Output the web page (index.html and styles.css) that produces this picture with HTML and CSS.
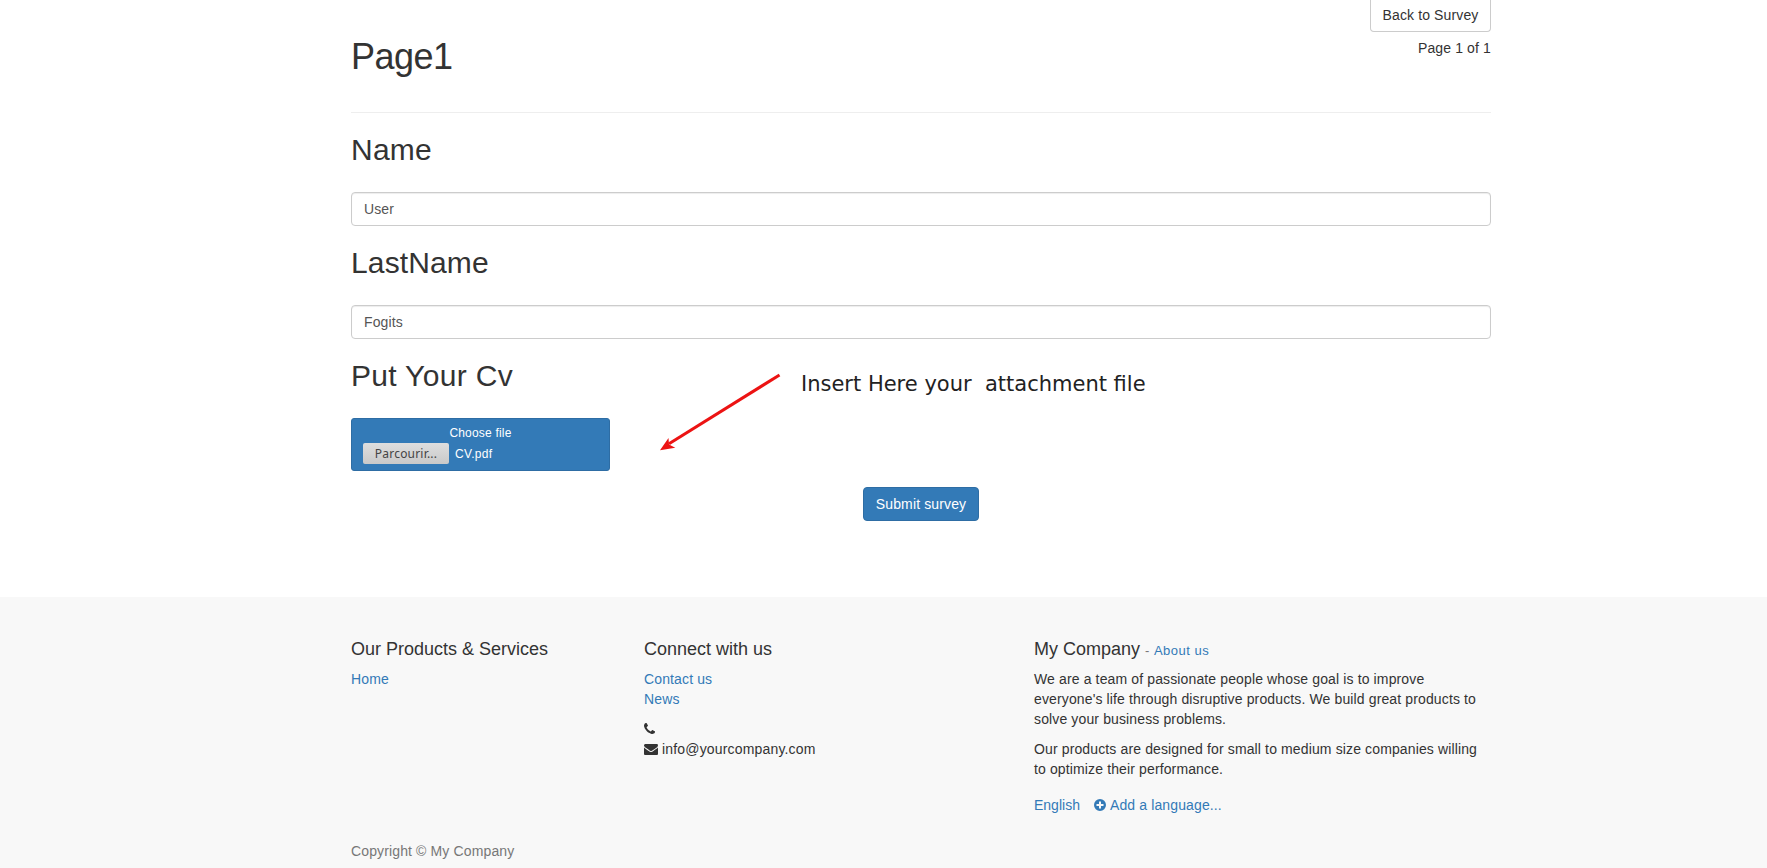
FILE: index.html
```html
<!DOCTYPE html>
<html lang="en">
<head>
<meta charset="utf-8">
<title>Survey</title>
<link rel="stylesheet" href="styles.css">
</head>
<body>
<main class="container">
  <header class="page-header">
    <h1 class="title">Page1</h1>
    <div class="header-side">
      <a class="btn btn-back">Back to Survey</a>
      <div class="pager">Page 1 of 1</div>
    </div>
  </header>
  <form class="survey">
    <h2 class="question q-name">Name</h2>
    <div class="control">User</div>
    <h2 class="question q-last">LastName</h2>
    <div class="control">Fogits</div>
    <h2 class="question q-cv">Put Your Cv</h2>
    <div class="file-box">
      <span class="file-label">Choose file</span>
      <div class="file-row"><span class="browse">Parcourir...</span><span class="file-name">CV.pdf</span></div>
    </div>
    <div class="actions"><a class="btn btn-submit">Submit survey</a></div>
    <svg class="arrow" width="130" height="84" viewBox="0 0 130 84">
      <path d="M119.500 5 L9 73.700" stroke="#ec1313" stroke-width="3" fill="none"/>
      <path d="M0 80.300 L8.500 68 L9 74.500 L15.300 77.700 Z" fill="#ec1313"/>
    </svg>
    <div class="note">Insert Here your&nbsp; attachment file</div>
  </form>
</main>
<footer class="footer">
  <div class="container columns">
    <section class="col-products">
      <h4>Our Products &amp; Services</h4>
      <a>Home</a>
    </section>
    <section class="col-connect">
      <h4>Connect with us</h4>
      <ul class="links">
        <li><a>Contact us</a></li>
        <li><a>News</a></li>
      </ul>
      <ul class="links">
        <li><svg class="icon phone" viewBox="0 0 1408 1408"><path d="M1408 1112q0 27-10 70.500t-21 68.500q-21 50-122 106-94 51-186 51-27 0-53-3.500t-57.500-12.500-47-14.500-55.500-20.500-49-18q-98-35-175-83-127-79-264-216t-216-264q-48-77-83-175-3-9-18-49t-20.500-55.500-14.500-47-12.500-57.500-3.500-53q0-92 51-186 56-101 106-122 25-11 68.500-21t70.500-10q14 0 21 3 18 6 53 76 11 19 30 54t35 63.500 31 53.500q3 4 17.500 25t21.500 35.500 7 28.500q0 20-28.500 50t-62 55-62 53-28.500 46q0 9 5 22.500t8.500 20.500 14 24 11.500 19q76 137 174 235t235 174q2 1 19 11.500t24 14 20.500 8.500 22.500 5q18 0 46-28.500t53-62 55-62 50-28.500q14 0 28.500 7t35.500 21.500 25 17.500q25 15 53.500 31t63.500 35 54 30q70 35 76 53 3 7 3 21z"/></svg></li>
        <li class="mail-row"><svg class="icon mail" viewBox="0 0 1792 1408"><path d="M1792 454v794q0 66-47 113t-113 47h-1472q-66 0-113-47t-47-113v-794q44 49 101 87 362 246 497 345 57 42 92.500 65.500t94.500 48 110 24.500h2q51 0 110-24.500t94.500-48 92.500-65.500q170-123 498-345 57-39 100-87zm0-294q0 79-49 151t-122 123q-376 261-468 325-10 7-42.500 30.500t-54 38-52 32.500-57.500 27-50 9h-2q-23 0-50-9t-57.500-27-52-32.500-54-38-42.500-30.500q-91-64-262-182.500t-205-142.500q-62-42-117-115.500t-55-136.500q0-78 41.500-130t118.500-52h1472q65 0 112.500 47t47.500 113z"/></svg>info@yourcompany.com</li>
      </ul>
    </section>
    <section class="col-company">
      <h4>My Company<small class="about"><span class="dash">-</span><a>About us</a></small></h4>
      <p>We are a team of passionate people whose goal is to improve<br>everyone's life through disruptive products. We build great products to<br>solve your business problems.</p>
      <p>Our products are designed for small to medium size companies willing<br>to optimize their performance.</p>
      <div class="languages"><a class="current-lang">English</a><a class="add-lang"><svg class="icon plus" viewBox="0 0 12 12"><path fill-rule="evenodd" d="M6 0a6 6 0 1 1 0 12a6 6 0 0 1 0-12zM5 2.500V5H2.500V7H5V9.500H7V7H9.500V5H7V2.500z"/></svg>Add a language...</a></div>
    </section>
  </div>
  <div class="container copyright">Copyright © My Company</div>
</footer>
</body>
</html>
```

FILE: styles.css
```css
* { box-sizing: border-box; }
body { margin: 0; height: 868px; overflow: hidden; background: #fff; color: #333; font: 14px/20px "Liberation Sans", Arial, sans-serif; letter-spacing: .13px; display: flex; flex-direction: column; }
h1, h2, h4, p, ul { margin: 0; padding: 0; font-weight: 400; }
ul { list-style: none; }
a { color: #337ab7; text-decoration: none; }
p, .btn, .note { white-space: nowrap; }
.container { width: 1140px; margin-left: 351px; }
main.container { height: 597px; flex: none; }
.page-header { height: 113px; border-bottom: 1px solid #eee; display: flex; justify-content: space-between; }
.title { font-size: 36px; line-height: 40px; letter-spacing: -.5px; padding-top: 37px; }
.header-side { display: flex; flex-direction: column; align-items: flex-end; }
.btn { display: inline-flex; justify-content: center; height: 34px; padding: 6px 11px; border: 1px solid #ccc; border-radius: 4px; }
.btn-back { width: 121px; height: 32px; padding-top: 5px; border-top: 0; border-radius: 0 0 4px 4px; color: #333; }
.pager { margin-top: 6px; }
.survey { position: relative; padding-top: 20px; }
.question { font-size: 30px; line-height: 33px; margin-bottom: 26px; }
.q-name { letter-spacing: .25px; }
.q-cv { letter-spacing: .32px; }
.control { height: 34px; margin-bottom: 20px; padding: 6px 12px; border: 1px solid #ccc; border-radius: 4px; box-shadow: inset 0 1px 1px rgba(0,0,0,.075); color: #555; }
.file-box { width: 259px; height: 53px; padding: 5px 11px; background: #337ab7; border: 1px solid #2e6da4; border-radius: 3px; color: #fff; font-size: 12px; line-height: 18px; letter-spacing: .2px; text-align: center; }
.file-row { display: flex; align-items: center; gap: 6px; height: 23px; }
.file-name { letter-spacing: .3px; }
.browse { width: 86px; height: 21px; border-radius: 2px; background: linear-gradient(#dedede, #c9c9c9); color: #444; font: 12px/22px "Noto Sans", sans-serif; }
.actions { display: flex; justify-content: center; margin-top: 16px; }
.btn-submit { width: 116px; background: #337ab7; border-color: #2e6da4; color: #fff; }
.arrow { position: absolute; left: 309px; top: 257px; }
.note { position: absolute; left: 450px; top: 257px; color: #222; font: 21px/28px "DejaVu Sans", sans-serif; letter-spacing: 0; }
.footer { flex: 1; background: #f8f8f8; padding-top: 42px; }
.columns { display: flex; height: 202px; }
.col-products { width: 293px; }
.col-connect { width: 390px; }
.col-company { width: 457px; }
h4 { height: 20px; font-size: 18px; line-height: 20px; letter-spacing: 0; margin-bottom: 10px; }
p, .links { margin-bottom: 10px; }
.icon { fill: #333; }
.links li { height: 20px; }
.phone { width: 11px; height: 11px; display: block; position: relative; top: 4px; }
.mail { width: 14px; height: 11px; margin-right: 4px; vertical-align: -1px; }
.mail-row { letter-spacing: .17px; }
.about { font-size: 13px; line-height: 1; color: #777; margin-left: 5px; letter-spacing: .5px; }
.dash { margin-right: 4px; }
.languages { display: flex; margin-top: 16px; }
.current-lang { letter-spacing: 0; }
.add-lang { margin-left: 14px; }
.plus { width: 12px; height: 12px; fill: #337ab7; margin-right: 4px; vertical-align: -1px; }
.copyright { color: #777; }
```
